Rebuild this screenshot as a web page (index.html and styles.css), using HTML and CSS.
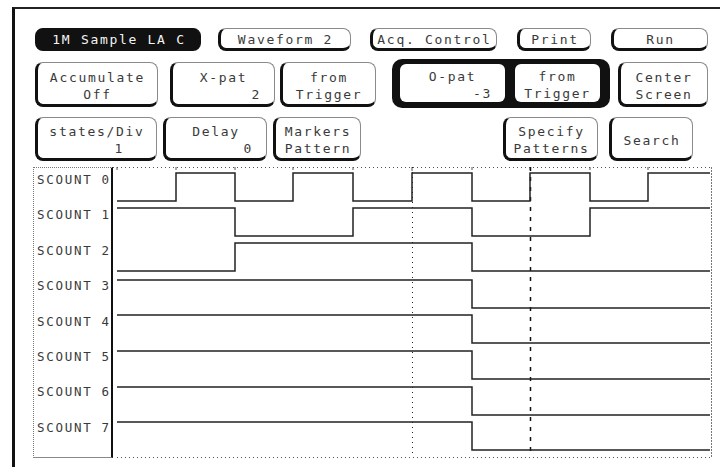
FILE: index.html
```html
<html>
<head>
<meta http-equiv="Content-Type" content="text/html; charset=utf-8"/>
<title>Waveform 2</title>
<link rel="stylesheet" href="styles.css">
</head>
<body>
<div class="screen">

	<div class="row row-top">
		<div class="btn btn-dark w-sample">1M Sample LA C</div>
		<div class="btn w-wave">Waveform 2</div>
		<div class="btn w-acq">Acq. Control</div>
		<div class="btn w-print">Print</div>
		<div class="btn w-run">Run</div>
	</div>

	<div class="row row-mid">
		<div class="btn w-accum"><span>Accumulate</span><span>Off</span></div>
		<div class="btn w-xpat"><span>X-pat</span><span class="val">2</span></div>
		<div class="btn w-xtrig"><span>from</span><span>Trigger</span></div>
		<div class="opat-group">
			<div class="btn-inner w-opat"><span>O-pat</span><span class="val">-3</span></div>
			<div class="btn-inner w-otrig"><span>from</span><span>Trigger</span></div>
		</div>
		<div class="btn w-center"><span>Center</span><span>Screen</span></div>
	</div>

	<div class="row row-low">
		<div class="btn w-states"><span>states/Div</span><span class="val val-wide">1</span></div>
		<div class="btn w-delay"><span>Delay</span><span class="val">0</span></div>
		<div class="btn w-markers"><span>Markers</span><span>Pattern</span></div>
		<div class="btn w-specify"><span>Specify</span><span>Patterns</span></div>
		<div class="btn w-search">Search</div>
	</div>

	<div class="trace">
		<div class="labels">
			<div>SCOUNT 0</div>
			<div>SCOUNT 1</div>
			<div>SCOUNT 2</div>
			<div>SCOUNT 3</div>
			<div>SCOUNT 4</div>
			<div>SCOUNT 5</div>
			<div>SCOUNT 6</div>
			<div>SCOUNT 7</div>
		</div>
		<svg class="waves" width="599" height="291" viewBox="0 0 599 291">
			<!-- frame of the plot -->
			<line x1="0" y1="0.5" x2="598" y2="0.5" class="dots"/>
			<line x1="4" y1="290.5" x2="598" y2="290.5" class="dots"/>
			<line x1="598.5" y1="0" x2="598.5" y2="291" class="edge"/>
			<path d="M4 0 v3 M63 0 v3 M122 0 v3 M180 0 v3 M240 0 v3 M299 0 v4 M359 0 v3 M417 0 v3 M477 0 v3 M535 0 v3" class="tick"/>

			<!-- X and O markers -->
			<line x1="299.5" y1="0" x2="299.5" y2="290" class="xmark"/>
			<line x1="417.5" y1="0" x2="417.5" y2="290" class="omark"/>

			<!-- signals -->
			<path class="sig" d="M4 34 H63 V6 H122 V34 H180 V6 H240 V34 H299 V6 H359 V34 H417 V6 H477 V34 H535 V6 H597"/>
			<path class="sig" d="M4 41 H122 V69 H240 V41 H359 V69 H477 V41 H597"/>
			<path class="sig" d="M4 104 H122 V76 H359 V104 H597"/>
			<path class="sig" d="M4 113 H359 V141 H597"/>
			<path class="sig" d="M4 148 H359 V176 H597"/>
			<path class="sig" d="M4 184 H359 V212 H597"/>
			<path class="sig" d="M4 220 H359 V248 H597"/>
			<path class="sig" d="M4 255 H359 V283 H597"/>
		</svg>
	</div>

</div>
</body>
</html>
```

FILE: styles.css
```css
body{
	margin: 0;
	background-color: #ffffff;
	color: #3a3a3a;
	font-family: "DejaVu Sans Mono", "Liberation Mono", monospace;
	font-size: 13px;
	letter-spacing: 1.7px;
}

div.screen{
	margin: 7px 0 0 12px;
	height: 451px;
	padding: 19px 0 0 20px;
	border-left: 3px solid #111;
	border-top: 2px solid #222;
}

div.row{
	display: flex;
	align-items: stretch;
}
div.row-top{ height: 23px; }
div.row-mid{ height: 45px; margin-top: 11px; }
div.row-low{ height: 44px; margin-top: 10px; }

.btn{
	box-sizing: border-box;
	display: flex;
	flex-direction: column;
	justify-content: center;
	text-align: center;
	line-height: 17px;
	padding-top: 4px;
	border-top: 1px solid #8a8a8a;
	border-right: 1px solid #8a8a8a;
	border-left: 3px solid #111;
	border-bottom: 3px solid #111;
	border-radius: 8px;
	background-color: #ffffff;
}
.row-top .btn{
	padding-top: 2px;
}
.btn-dark{
	background-color: #111;
	color: #f4f4f4;
	border-color: #111;
}

.val{
	text-align: right;
	padding-right: 13px;
}
.val-wide{
	padding-right: 32px;
}

/* first row */
.w-sample{ width: 166px; }
.w-wave{ width: 133px; margin-left: 17px; }
.w-acq{ width: 127px; margin-left: 19px; }
.w-print{ width: 74px; margin-left: 20px; }
.w-run{ width: 97px; margin-left: 20px; }

/* second row */
.w-accum{ width: 123px; }
.w-xpat{ width: 105px; margin-left: 12px; }
.w-xtrig{ width: 96px; margin-left: 5px; }
.w-center{ width: 90px; margin-left: 8px; }

div.opat-group{
	box-sizing: border-box;
	display: flex;
	width: 218px;
	height: 49px;
	margin: -3px 0 0 16px;
	padding: 5px 10px 6px 8px;
	background-color: #111;
	border-radius: 10px;
}
.btn-inner{
	box-sizing: border-box;
	display: flex;
	flex-direction: column;
	justify-content: center;
	text-align: center;
	line-height: 17px;
	padding-top: 4px;
	background-color: #ffffff;
	border-radius: 6px;
}
.w-opat{ width: 105px; }
.w-otrig{ width: 85px; margin-left: 10px; }

/* third row */
.w-states{ width: 122px; }
.w-delay{ width: 104px; margin-left: 6px; }
.w-markers{ width: 88px; margin-left: 6px; }
.w-specify{ width: 95px; margin-left: 142px; }
.w-search{ width: 84px; margin-left: 11px; }

/* waveform display */
div.trace{
	display: flex;
	margin: 6px 0 0 -2px;
	height: 291px;
}
div.labels{
	box-sizing: border-box;
	width: 80px;
	display: flex;
	flex-direction: column;
	gap: 21.4px;
	padding: 5px 0 0 3px;
	line-height: 14px;
	font-size: 12.5px;
	border-left: 1px dotted #777;
	border-top: 1px dotted #777;
	border-bottom: 1px solid #888;
	border-right: 2px solid #111;
	white-space: nowrap;
}
svg.waves{
	display: block;
}

.sig{
	fill: none;
	stroke: #222;
	stroke-width: 1.5;
}
.dots{
	stroke: #555;
	stroke-width: 1;
	stroke-dasharray: 1 3;
}
.edge{
	stroke: #777;
	stroke-width: 1;
	stroke-dasharray: 2 1;
}
.tick{
	stroke: #555;
	stroke-width: 1;
}
.xmark{
	stroke: #222;
	stroke-width: 1;
	stroke-dasharray: 1 4;
}
.omark{
	stroke: #111;
	stroke-width: 1.5;
	stroke-dasharray: 4 6;
}
```
